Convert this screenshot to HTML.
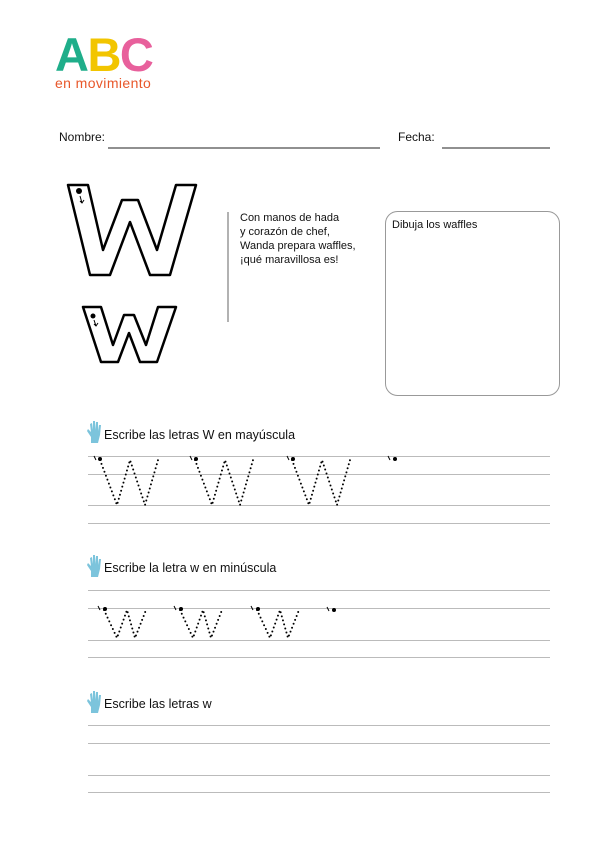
<!DOCTYPE html>
<html><head><meta charset="utf-8"><style>
body{margin:0;width:595px;height:842px;background:#fff;position:relative;font-family:"Liberation Sans",sans-serif;color:#111;overflow:hidden}
.a{position:absolute;white-space:nowrap}
</style></head><body>
<div class="a" style="left:55px;top:31px;font-size:47px;font-weight:bold;letter-spacing:-1.5px;line-height:47px"><span style="color:#1fae8a">A</span><span style="color:#f2c500">B</span><span style="color:#e8609c">C</span></div>
<div class="a" style="left:55px;top:75px;font-size:14px;letter-spacing:0.4px;color:#e8572a">en movimiento</div>

<div class="a" style="left:59px;top:130px;font-size:12px">Nombre:</div>
<div class="a" style="left:398px;top:130px;font-size:12px">Fecha:</div>

<svg class="a" style="left:0;top:0" width="595" height="842">
<g stroke="#222" stroke-width="1"><line x1="108" y1="148" x2="380" y2="148"/><line x1="442" y1="148" x2="550" y2="148"/></g>
<line x1="228" y1="212" x2="228" y2="322" stroke="#666" stroke-width="1"/>
<rect x="385.5" y="211.5" width="174" height="184" rx="12" fill="none" stroke="#999"/>
<path d="M68 185 L88 185 L103 250 L122 200 L138 200 L157 250 L176 185 L196 185 L170 275 L150 275 L130 222 L110 275 L90 275 Z" fill="#fff" stroke="#000" stroke-width="2.5" stroke-linejoin="round"/>
<circle cx="79" cy="191" r="3" fill="#000"/><path d="M80 196 L82 203 M80 201 L82 203 L84 200" stroke="#000" fill="none"/>
<path d="M83 307 L101 307 L113 345 L124 315 L134 315 L146 345 L158 307 L176 307 L157 362 L140 362 L129 333 L118 362 L101 362 Z" fill="#fff" stroke="#000" stroke-width="2.5" stroke-linejoin="round"/>
<circle cx="93" cy="316" r="2.5" fill="#000"/><path d="M94 320 L96 326 M94 324 L96 326 L98 323" stroke="#000" fill="none"/>
<g stroke="#bbb" stroke-width="1">
<line x1="88" y1="456.5" x2="550" y2="456.5"/><line x1="88" y1="474.5" x2="550" y2="474.5"/><line x1="88" y1="505.5" x2="550" y2="505.5"/><line x1="88" y1="523.5" x2="550" y2="523.5"/>
<line x1="88" y1="590.5" x2="550" y2="590.5"/><line x1="88" y1="608.5" x2="550" y2="608.5"/><line x1="88" y1="640.5" x2="550" y2="640.5"/><line x1="88" y1="657.5" x2="550" y2="657.5"/>
<line x1="88" y1="725.5" x2="550" y2="725.5"/><line x1="88" y1="743.5" x2="550" y2="743.5"/><line x1="88" y1="775.5" x2="550" y2="775.5"/><line x1="88" y1="792.5" x2="550" y2="792.5"/>
</g>
<g fill="none" stroke="#000" stroke-width="2" stroke-linecap="round" stroke-dasharray="0 4.2">
<path d="M100 460 L117 505 L130 460 L145 505 L158 460"/>
<path d="M195 460 L212 505 L225 460 L240 505 L253 460"/>
<path d="M292 460 L309 505 L322 460 L337 505 L350 460"/>
<path d="M104 610 L117 638 L127 610 L135 638 L146 610"/>
<path d="M180 610 L193 638 L203 610 L211 638 L222 610"/>
<path d="M257 610 L270 638 L280 610 L288 638 L299 610"/>
</g>
<g fill="#000"><circle cx="100" cy="459" r="2"/><circle cx="196" cy="459" r="2"/><circle cx="293" cy="459" r="2"/><circle cx="395" cy="459" r="2"/>
<circle cx="105" cy="609" r="2"/><circle cx="181" cy="609" r="2"/><circle cx="258" cy="609" r="2"/><circle cx="334" cy="610" r="2"/></g>
<g stroke="#000" stroke-width="1"><line x1="94" y1="456" x2="96" y2="460"/><line x1="190" y1="456" x2="192" y2="460"/><line x1="287" y1="456" x2="289" y2="460"/><line x1="388" y1="456" x2="390" y2="460"/>
<line x1="98" y1="606" x2="100" y2="610"/><line x1="174" y1="606" x2="176" y2="610"/><line x1="251" y1="606" x2="253" y2="610"/><line x1="327" y1="607" x2="329" y2="611"/></g>
<g fill="#7cc4dc">
<path id="h" d="M91 443 L91 437 L87 431 L88 429 L91 432 L90 424 L92 423 L93 430 L93 421 L95 421 L95 430 L96 422 L98 422 L98 431 L99 425 L101 425 L100 435 L98 443 Z"/>
<use href="#h" y="134"/><use href="#h" y="270"/>
</g>
</svg>

<div class="a" style="left:240px;top:211px;font-size:11px;line-height:14px;white-space:normal">Con manos de hada<br>y corazón de chef,<br>Wanda prepara waffles,<br>¡qué maravillosa es!</div>
<div class="a" style="left:392px;top:219px;font-size:11px">Dibuja los waffles</div>

<div class="a" style="left:104px;top:428px;font-size:12.5px">Escribe las letras W en mayúscula</div>
<div class="a" style="left:104px;top:561px;font-size:12.5px">Escribe la letra w en minúscula</div>
<div class="a" style="left:104px;top:697px;font-size:12.5px">Escribe las letras w</div>
</body></html>
